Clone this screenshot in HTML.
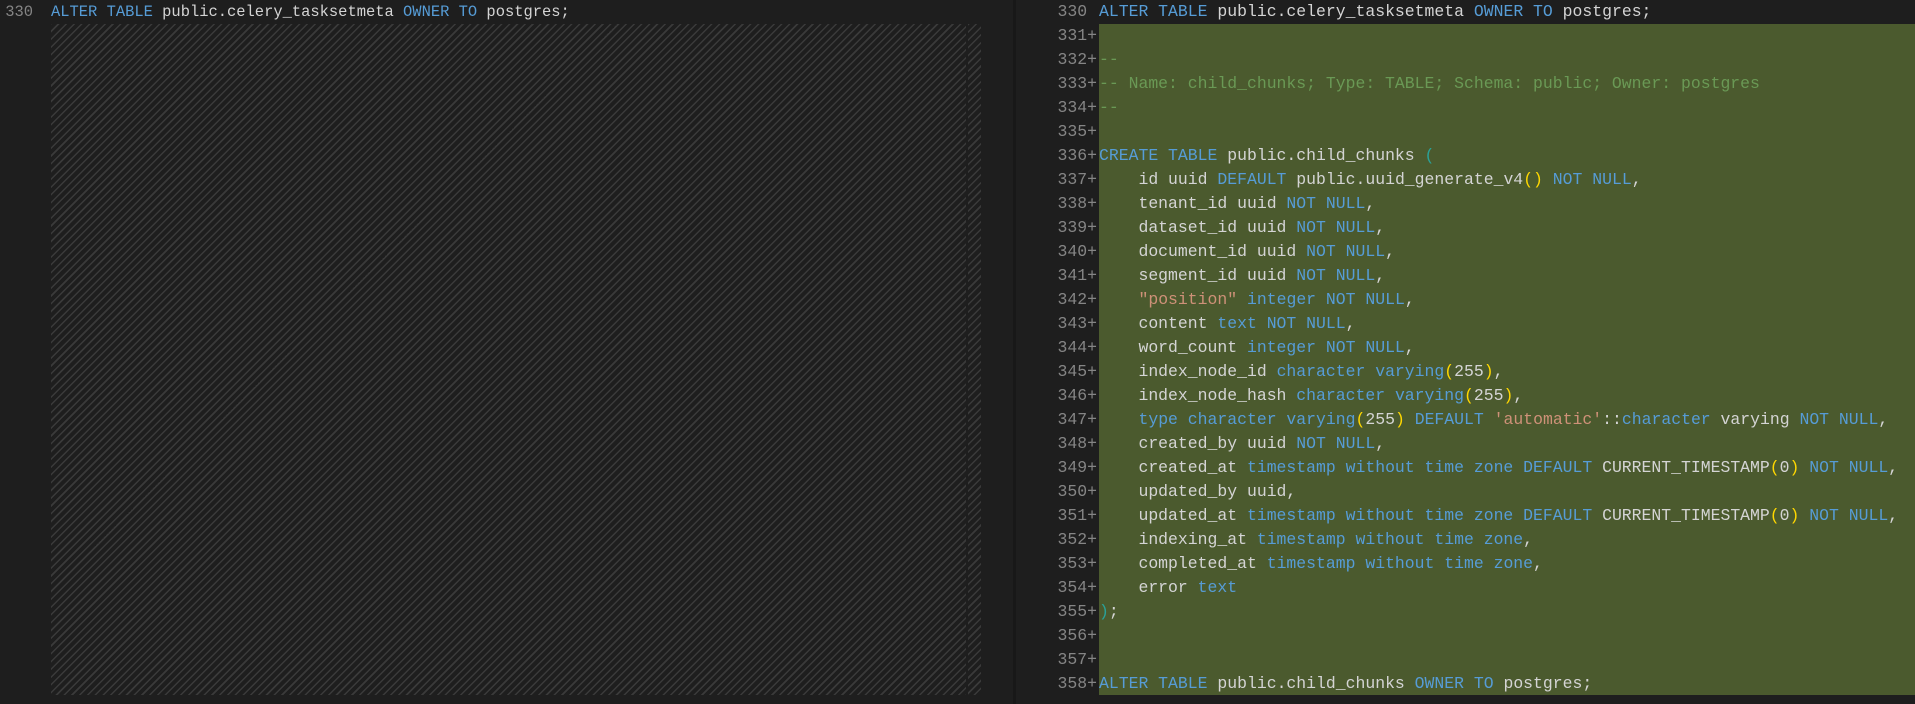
<!DOCTYPE html>
<html><head><meta charset="utf-8"><style>
html,body{margin:0;padding:0;background:#1e1e1e;width:1915px;height:704px;overflow:hidden}
body{font-family:"Liberation Mono",monospace;font-size:15.45px;color:#d4d4d4;position:relative}
.l{position:absolute;height:24px;line-height:24px;white-space:pre}
.n{position:absolute;height:24px;line-height:24px;color:#858585;text-align:right;white-space:pre}
#r{font-size:16.45px}
.k{color:#569cd6}.c{color:#6a9955}.s{color:#ce9178}.y{color:#ffd700}.t{color:#2aa198}
.hatch{position:absolute;left:51px;top:24px;width:930px;height:671px;background:repeating-linear-gradient(-45deg,#1e1e1e 0,#1e1e1e 4px,#3a3a3a 4px,#3a3a3a 5.5px)}
</style></head><body>
<div class="hatch"></div>
<div style="position:absolute;left:966px;top:24px;width:2px;height:671px;background:#1e1e1e"></div>
<div style="position:absolute;left:1013px;top:0;width:3px;height:704px;background:#181818"></div>
<div style="position:absolute;left:1099px;top:24px;width:816px;height:671px;background:#4b5a2e"></div>
<div class="n" style="left:0;width:33px;top:0">330</div>
<div class="l" style="left:51px;top:0"><span class="k">ALTER TABLE</span> public.celery_tasksetmeta <span class="k">OWNER TO</span> postgres;</div>
<div id="r"></div>
<script>
var L=[
'<span class="k">ALTER TABLE</span> public.celery_tasksetmeta <span class="k">OWNER TO</span> postgres;',
'',
'<span class="c">--</span>',
'<span class="c">-- Name: child_chunks; Type: TABLE; Schema: public; Owner: postgres</span>',
'<span class="c">--</span>',
'',
'<span class="k">CREATE TABLE</span> public.child_chunks <span class="t">(</span>',
'    id uuid <span class="k">DEFAULT</span> public.uuid_generate_v4<span class="y">()</span> <span class="k">NOT NULL</span>,',
'    tenant_id uuid <span class="k">NOT NULL</span>,',
'    dataset_id uuid <span class="k">NOT NULL</span>,',
'    document_id uuid <span class="k">NOT NULL</span>,',
'    segment_id uuid <span class="k">NOT NULL</span>,',
'    <span class="s">"position"</span> <span class="k">integer NOT NULL</span>,',
'    content <span class="k">text NOT NULL</span>,',
'    word_count <span class="k">integer NOT NULL</span>,',
'    index_node_id <span class="k">character varying</span><span class="y">(</span>255<span class="y">)</span>,',
'    index_node_hash <span class="k">character varying</span><span class="y">(</span>255<span class="y">)</span>,',
'    <span class="k">type character varying</span><span class="y">(</span>255<span class="y">)</span> <span class="k">DEFAULT</span> <span class="s">\'automatic\'</span>::<span class="k">character</span> varying <span class="k">NOT NULL</span>,',
'    created_by uuid <span class="k">NOT NULL</span>,',
'    created_at <span class="k">timestamp without time zone DEFAULT</span> CURRENT_TIMESTAMP<span class="y">(</span>0<span class="y">)</span> <span class="k">NOT NULL</span>,',
'    updated_by uuid,',
'    updated_at <span class="k">timestamp without time zone DEFAULT</span> CURRENT_TIMESTAMP<span class="y">(</span>0<span class="y">)</span> <span class="k">NOT NULL</span>,',
'    indexing_at <span class="k">timestamp without time zone</span>,',
'    completed_at <span class="k">timestamp without time zone</span>,',
'    error <span class="k">text</span>',
'<span class="t">)</span>;',
'',
'',
'<span class="k">ALTER TABLE</span> public.child_chunks <span class="k">OWNER TO</span> postgres;'
];
var h='';
for(var i=0;i<L.length;i++){
 var num=330+i, lab=i==0?'330 ':num+'+';
 h+='<div class="n" style="left:1030px;width:67px;top:'+(i*24)+'px">'+lab+'</div>';
 h+='<div class="l" style="left:1099px;top:'+(i*24)+'px">'+L[i]+'</div>';
}
document.getElementById('r').innerHTML=h;
</script>
</body></html>
